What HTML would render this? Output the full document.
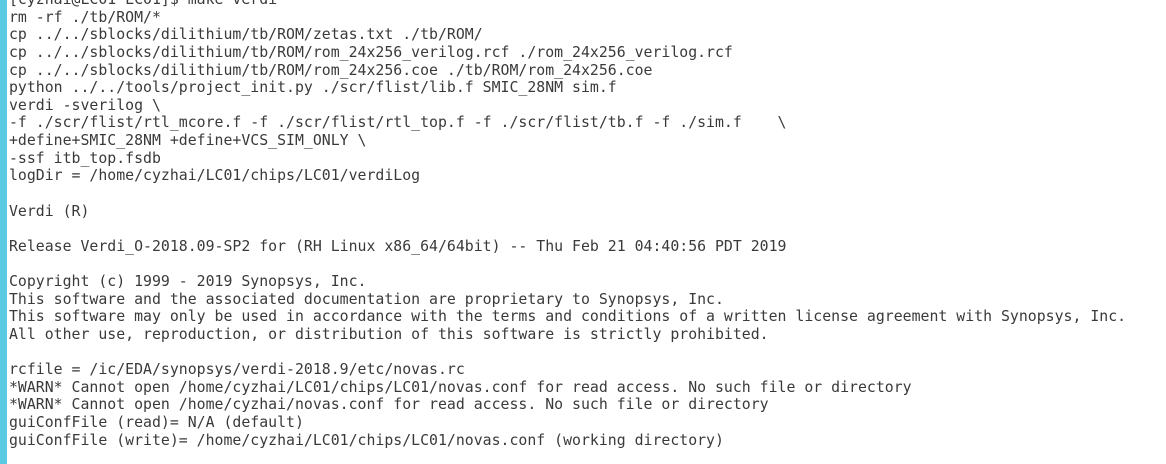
<!DOCTYPE html>
<html><head><meta charset="utf-8"><style>
html,body{margin:0;padding:0;width:1166px;height:464px;overflow:hidden;background:#fff;}
.bar{position:absolute;left:0;top:0;width:7px;height:464px;background:#5bcbe3;}
pre{position:absolute;left:9px;top:-9px;margin:0;font-family:"DejaVu Sans Mono","Liberation Mono",monospace;font-size:14.85px;line-height:17.62px;color:#3a3a3a;}
</style></head><body>
<div class="bar"></div>
<pre>[cyzhai@LC01 LC01]$ make verdi
rm -rf ./tb/ROM/*
cp ../../sblocks/dilithium/tb/ROM/zetas.txt ./tb/ROM/
cp ../../sblocks/dilithium/tb/ROM/rom_24x256_verilog.rcf ./rom_24x256_verilog.rcf
cp ../../sblocks/dilithium/tb/ROM/rom_24x256.coe ./tb/ROM/rom_24x256.coe
python ../../tools/project_init.py ./scr/flist/lib.f SMIC_28NM sim.f
verdi -sverilog \
-f ./scr/flist/rtl_mcore.f -f ./scr/flist/rtl_top.f -f ./scr/flist/tb.f -f ./sim.f    \
+define+SMIC_28NM +define+VCS_SIM_ONLY \
-ssf itb_top.fsdb
logDir = /home/cyzhai/LC01/chips/LC01/verdiLog

Verdi (R)

Release Verdi_O-2018.09-SP2 for (RH Linux x86_64/64bit) -- Thu Feb 21 04:40:56 PDT 2019

Copyright (c) 1999 - 2019 Synopsys, Inc.
This software and the associated documentation are proprietary to Synopsys, Inc.
This software may only be used in accordance with the terms and conditions of a written license agreement with Synopsys, Inc.
All other use, reproduction, or distribution of this software is strictly prohibited.

rcfile = /ic/EDA/synopsys/verdi-2018.9/etc/novas.rc
*WARN* Cannot open /home/cyzhai/LC01/chips/LC01/novas.conf for read access. No such file or directory
*WARN* Cannot open /home/cyzhai/novas.conf for read access. No such file or directory
guiConfFile (read)= N/A (default)
guiConfFile (write)= /home/cyzhai/LC01/chips/LC01/novas.conf (working directory)
</pre>
</body></html>
